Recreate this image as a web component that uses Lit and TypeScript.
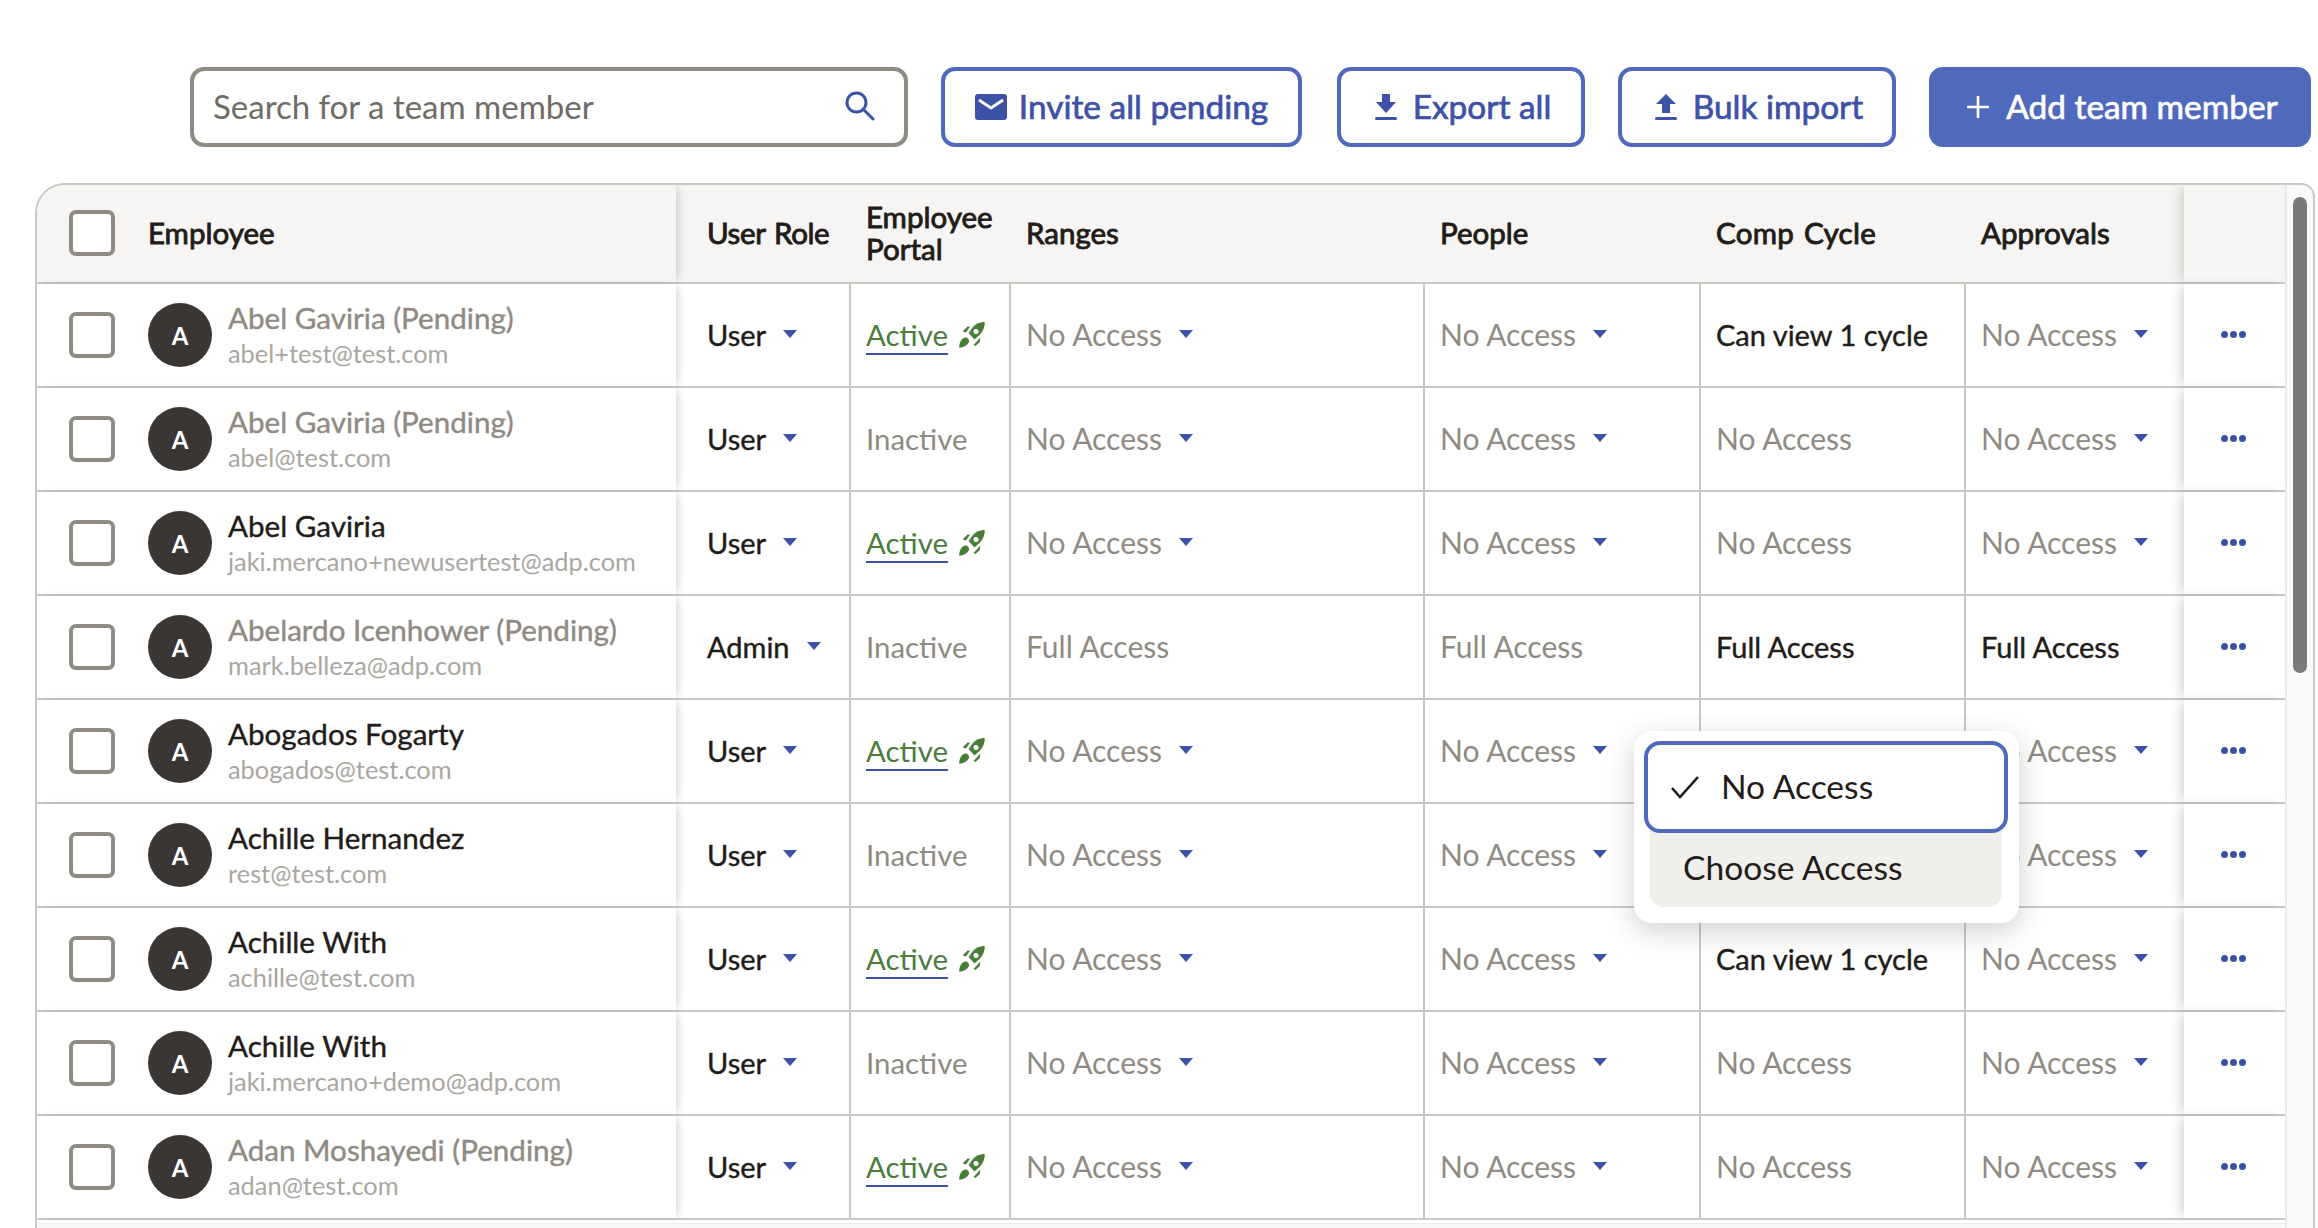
import { LitElement, html, css, svg } from "lit";
import { customElement } from "lit/decorators.js";

type Cell = { t: string; caret?: boolean; dark?: boolean } | null;
interface Row {
  name: string; email: string; pending: boolean; role: string; active: boolean;
  ranges: Cell; people: Cell; comp: Cell; appr: Cell;
}
const na: Cell = { t: "No Access", caret: true };
const plain: Cell = { t: "No Access" };
const can: Cell = { t: "Can view 1 cycle", dark: true };

const rows: Row[] = [
  { name: "Abel Gaviria (Pending)", email: "abel+test@test.com", pending: true, role: "User", active: true, ranges: na, people: na, comp: can, appr: na },
  { name: "Abel Gaviria (Pending)", email: "abel@test.com", pending: true, role: "User", active: false, ranges: na, people: na, comp: plain, appr: na },
  { name: "Abel Gaviria", email: "jaki.mercano+newusertest@adp.com", pending: false, role: "User", active: true, ranges: na, people: na, comp: plain, appr: na },
  { name: "Abelardo Icenhower (Pending)", email: "mark.belleza@adp.com", pending: true, role: "Admin", active: false, ranges: { t: "Full Access" }, people: { t: "Full Access" }, comp: { t: "Full Access", dark: true }, appr: { t: "Full Access", dark: true } },
  { name: "Abogados Fogarty", email: "abogados@test.com", pending: false, role: "User", active: true, ranges: na, people: na, comp: null, appr: na },
  { name: "Achille Hernandez", email: "rest@test.com", pending: false, role: "User", active: false, ranges: na, people: na, comp: null, appr: na },
  { name: "Achille With", email: "achille@test.com", pending: false, role: "User", active: true, ranges: na, people: na, comp: can, appr: na },
  { name: "Achille With", email: "jaki.mercano+demo@adp.com", pending: false, role: "User", active: false, ranges: na, people: na, comp: plain, appr: na },
  { name: "Adan Moshayedi (Pending)", email: "adan@test.com", pending: true, role: "User", active: true, ranges: na, people: na, comp: plain, appr: na },
];

const rocket = svg`<path fill-rule="evenodd" d="M25.7.7C21 .9 17 2.5 14 6L9.5 12l6 6.5 5.5-5C24.5 10 26 5 25.7.7zM17 8a2.5 2.5 0 1 0 0 5 2.5 2.5 0 0 0 0-5z"/><path d="M3.5 10.5 8.5 5.5 11 5.8 7 11.5z"/><path d="M14.5 24 21.5 16.5 20.8 21 16.5 25z"/><path d="M.2 26.7C0 22 2.5 17 6 16.5c2.5 0 4.5 2 4 4.3C9 24 4 26.8.2 26.7z"/>`;

@customElement("app-root")
export class AppRoot extends LitElement {
  static styles = css`
    :host { display: block; height: 1228px; overflow: hidden; background: #fff; font-family: "Lato", "Liberation Sans", sans-serif; color: #1f1c19; position: relative; }
    .toolbar { display: flex; align-items: stretch; height: 80px; padding: 67px 7px 0 190px; box-sizing: content-box; }
    .search { width: 718px; box-sizing: border-box; border: 4px solid #8f8a82; border-radius: 14px; display: flex; align-items: center; justify-content: space-between; padding: 0 29px 0 19px; font-size: 33px; color: #6f6b65; margin-right: 33px; }
    .search span { margin-top: -2px; }
    .search svg { width: 30px; height: 30px; margin-top: -2px; }
    .btn { box-sizing: border-box; border: 4px solid #4f69bc; border-radius: 14px; display: flex; align-items: center; justify-content: center; gap: 12px; font-size: 33.4px; font-weight: 400; -webkit-text-stroke: .7px currentColor; color: #3d51a6; background: #fff; }
    .btn span { margin-top: -2px; }
    .b1 { width: 361px; margin-right: 35px; }
    .b2 { width: 248px; margin-right: 33px; gap: 16px; padding-left: 4px; }
    .b3 { width: 278px; margin-right: 33px; gap: 16px; padding-left: 4px; }
    .b4 { width: 382px; background: #4f69bc; color: #fff; gap: 16px; padding-left: 4px; }
    .wrap { margin: 36px 3px 0 35px; height: 1100px; box-sizing: border-box; border: 2px solid #cbc7c2; border-bottom: none; border-radius: 30px 14px 0 0; position: relative; overflow: hidden; display: flex; }
    .table { width: 2248px; flex: none; display: flex; flex-direction: column; }
    .rail { flex: 1; background: #fafafa; border-left: 2px solid #e8e8e8; padding: 12px 9px 0 6px; }
    .thumb { height: 476px; background: #7a7a7a; border-radius: 8px; width: 14px; }
    .row, .head { display: grid; grid-template-columns: 639px 175px 160px 414px 276px 265px 218px 99px; flex: none; }
    .head { height: 99px; background: #f6f5f3; border-bottom: 2px solid #cbc7c2; font-size: 29.5px; font-weight: 400; -webkit-text-stroke: .9px currentColor; word-spacing: 2px; box-sizing: border-box; padding-bottom: 2px; }
    .head .first, .head .end { margin-bottom: -2px; padding-bottom: 2px; }
    .row { height: 104px; box-sizing: border-box; border-bottom: 2px solid #cbc7c2; font-size: 30px; }
    .head > div, .row > div { display: flex; align-items: center; position: relative; box-sizing: border-box; min-width: 0; }
    .head .lh { line-height: 32px; }
    .c { padding-left: 15px; border-right: 2px solid #cbc7c2; }
    .row .c:not(.first) { padding-bottom: 2px; }
    .head .c { border-right: none; }
    .c.last { border-right: none; }
    .first { padding-left: 32px; gap: 33px; box-shadow: 5px 0 8px -3px rgba(60, 55, 50, .22); z-index: 2; border-right: none !important; }
    .c.role { padding-left: 31px; }
    .head .role { letter-spacing: -.4px; }
    .head .cc { letter-spacing: .3px; }
    .end { justify-content: center; box-shadow: -6px 0 10px -3px rgba(60, 55, 50, .22); z-index: 2; }
    .head .first, .head .end { background: #f6f5f3; }
    .row .first, .row .end { background: #fff; }
    .box { width: 46px; height: 46px; box-sizing: border-box; border: 4px solid #8f8a82; border-radius: 7px; flex: none; background: #fff; }
    .avatar { width: 64px; height: 64px; border-radius: 50%; background: #3a3633; color: #fff; font-size: 24px; font-weight: 700; display: flex; align-items: center; justify-content: center; flex: none; margin-right: -17px; }
    .who { display: flex; flex-direction: column; }
    .name { font-size: 29.6px; line-height: 36px; -webkit-text-stroke: .4px currentColor; }
    .name.pending { color: #8f8a82; }
    .email { font-size: 25.4px; line-height: 34px; color: #aaa6a0; }
    .gray { color: #8f8a82; }
    .dark { color: #1f1c19; font-size: 29px; -webkit-text-stroke: .4px currentColor; }
    .caret { width: 0; height: 0; border-left: 7px solid transparent; border-right: 7px solid transparent; border-top: 8px solid #3d51a6; margin-left: 17px; }
    .role-t { font-size: 29px; -webkit-text-stroke: .4px currentColor; }
    .portal { font-size: 29.4px; }
    .active { color: #4a7c3a; text-decoration: underline; text-decoration-color: #3d51a6; text-decoration-thickness: 2px; text-underline-offset: 7px; }
    .rocket { width: 26px; height: 27px; margin-left: 11px; fill: #4a7c3a; }
    .dots { display: flex; gap: 2px; margin-left: -1px; margin-top: -2px; }
    .dots i { width: 7px; height: 7px; border-radius: 50%; background: #3d51a6; }
    .hbar { flex: 1; margin-top: 3px; background: #f8f8f8; border-top: 1px solid #eeeeee; }
    .pop { position: absolute; left: 1634px; top: 731px; width: 385px; height: 192px; box-sizing: border-box; background: #fff; border-radius: 18px; box-shadow: 0 8px 28px rgba(50, 45, 40, .22); z-index: 5; display: flex; flex-direction: column; padding: 10px 11px 16px 10px; font-size: 33.6px; }
    .opt1 { height: 92px; box-sizing: border-box; border: 4px solid #4f69bc; border-radius: 16px; display: flex; align-items: center; padding-left: 23px; gap: 22px; background: #fff; position: relative; z-index: 1; }
    .opt1 span { margin-top: -2px; }
    .opt1 svg { width: 28px; height: 24px; }
    .opt2 { flex: 1; margin: -4px 6px 0; background: #f0efec; border-radius: 0 0 14px 14px; display: flex; align-items: center; padding: 0 0 2px 33px; }
  `;

  private cell(c: Cell, extra = "") {
    if (!c) return html`<div class="c ${extra}"></div>`;
    return html`<div class="c ${extra}"><span class="${c.dark ? "dark" : "gray"}">${c.t}</span>${c.caret ? html`<span class="caret"></span>` : ""}</div>`;
  }

  render() {
    return html`
      <div class="toolbar">
        <div class="search"><span>Search for a team member</span>
          <svg viewBox="0 0 30 30" fill="none" stroke="#3d51a6" stroke-width="3"><circle cx="11.5" cy="11.5" r="9.5"/><path d="M18.5 18.5 L28 28" stroke-linecap="round"/></svg>
        </div>
        <div class="btn b1">
          <svg width="32" height="26" viewBox="0 0 32 26"><rect width="32" height="26" rx="3" fill="#3d51a6"/><path d="M4 6 L16 14 L28 6" fill="none" stroke="#fff" stroke-width="3"/></svg>
          <span>Invite all pending</span></div>
        <div class="btn b2">
          <svg width="22" height="26" viewBox="0 0 22 26" fill="#3d51a6"><path d="M7 0h8v8h6L11 19 1 8h6z"/><rect y="23" width="22" height="3" rx="1.5"/></svg>
          <span>Export all</span></div>
        <div class="btn b3">
          <svg width="22" height="26" viewBox="0 0 22 26" fill="#3d51a6"><path d="M11 0l10 10h-6v9H7v-9H1z"/><rect y="23" width="22" height="3" rx="1.5"/></svg>
          <span>Bulk import</span></div>
        <div class="btn b4">
          <svg width="24" height="24" viewBox="0 0 24 24" stroke="#fff" stroke-width="2.6"><path d="M12 1v22M1 12h22"/></svg>
          <span>Add team member</span></div>
      </div>
      <div class="wrap">
        <div class="table">
          <div class="head">
            <div class="c first"><span class="box"></span><span>Employee</span></div>
            <div class="c role">User Role</div>
            <div class="c lh">Employee<br />Portal</div>
            <div class="c">Ranges</div>
            <div class="c">People</div>
            <div class="c cc">Comp Cycle</div>
            <div class="c">Approvals</div>
            <div class="end"></div>
          </div>
          ${rows.map((r) => html`
            <div class="row">
              <div class="c first"><span class="box"></span>
                <span class="avatar">A</span>
                <div class="who"><span class="name ${r.pending ? "pending" : ""}">${r.name}</span><span class="email">${r.email}</span></div>
              </div>
              <div class="c role"><span class="role-t">${r.role}</span><span class="caret"></span></div>
              <div class="c portal">${r.active
                ? html`<span class="active">Active</span><svg class="rocket" viewBox="0 0 26 27">${rocket}</svg>`
                : html`<span class="gray">Inactive</span>`}</div>
              ${this.cell(r.ranges)}${this.cell(r.people)}${this.cell(r.comp)}${this.cell(r.appr, "last")}
              <div class="end"><span class="dots"><i></i><i></i><i></i></span></div>
            </div>`)}
          <div class="hbar"></div>
        </div>
        <div class="rail"><div class="thumb"></div></div>
      </div>
      <div class="pop">
        <div class="opt1"><svg viewBox="0 0 28 24" fill="none" stroke="#1f1c19" stroke-width="2.6"><path d="M1 13 L9 22 L27 2"/></svg><span>No Access</span></div>
        <div class="opt2">Choose Access</div>
      </div>
    `;
  }
}
